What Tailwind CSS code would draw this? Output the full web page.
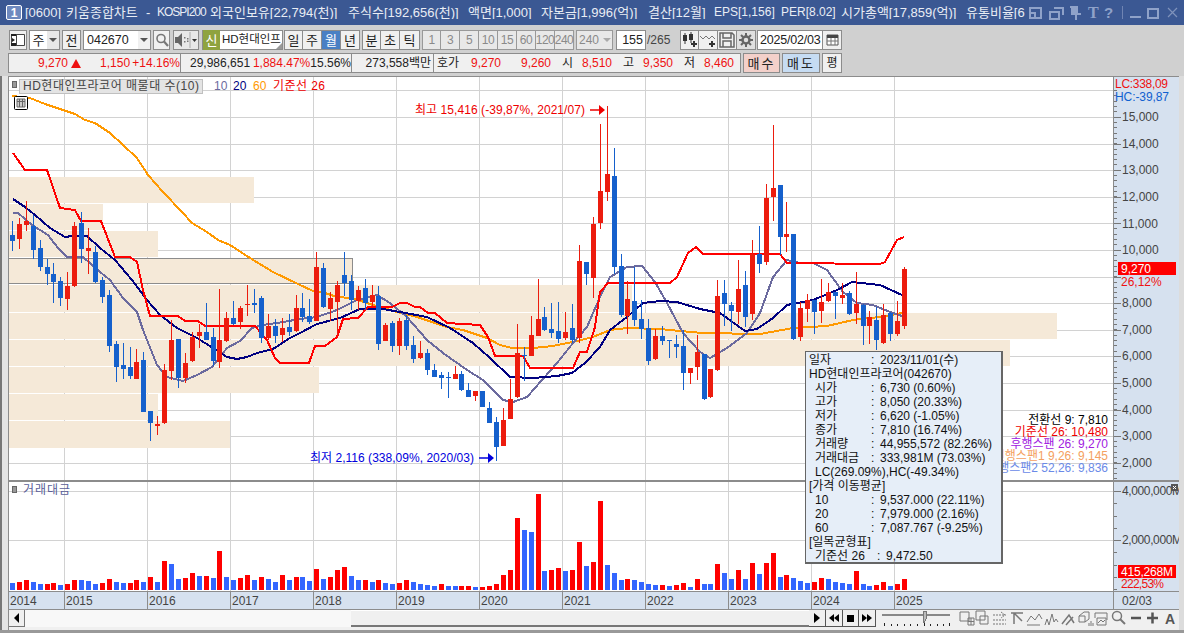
<!DOCTYPE html>
<html lang="ko">
<head>
<meta charset="utf-8">
<title>키움종합차트</title>
<script src="https://cdn.jsdelivr.net/npm/@tailwindcss/browser@4"></script>
</head>
<body class="[font-family:'Liberation_Sans','Noto_Sans_CJK_KR',sans-serif] text-[12px] leading-none">
<div class="w-[1184px] h-[633px] overflow-hidden flex flex-col bg-[#d0d0d0] text-[#222]">

  <!-- title bar -->
  <div class="h-[25px] shrink-0 bg-[#3b5893] flex items-center text-[#e9edf5] text-[13px] whitespace-nowrap">
    <div class="ml-[6px] w-[16px] h-[15px] rounded-[2px] border border-white bg-[#6f8abf] flex items-center justify-center text-white font-bold text-[12px]">1</div>
    <div class="ml-[3px] w-[1004px] flex overflow-hidden">
      <span class="w-[41px]">[0600]</span>
      <span class="w-[80px]">키움종합차트</span>
      <span class="w-[11px]">-</span>
      <span class="w-[53px] text-[12px] tracking-[-1px]">KOSPI200</span>
      <span class="w-[138px]">외국인보유[22,794(천)]</span>
      <span class="w-[120px]">주식수[192,656(천)]</span>
      <span class="w-[73px]">액면[1,000]</span>
      <span class="w-[107px]">자본금[1,996(억)]</span>
      <span class="w-[66px]">결산[12월]</span>
      <span class="w-[67px] text-[12px]">EPS[1,156]</span>
      <span class="w-[60px] text-[12px]">PER[8.02]</span>
      <span class="w-[125px]">시가총액[17,859(억)]</span>
      <span class="w-[60px]">유통비율[6</span>
    </div>
    <svg width="152" height="25" viewBox="1032 0 152 25" class="shrink-0" fill="none" stroke="#8fa2c9" stroke-width="2" shape-rendering="crispEdges">
      <path d="M1033 8h11v10h-11zM1033 13h5v5"/>
      <path d="M1057 8h9v7M1053 12h9v7h-9z" stroke-width="1.5"/>
      <path d="M1073 7h8M1074 14h10M1079 14v6M1075 8v6M1080 8v6" /><path d="M1075 8h5v6h-5z" fill="#8fa2c9" stroke="none"/>
      <text x="1091" y="18" font-family="Liberation Serif" font-size="16" font-weight="700" fill="#8fa2c9" stroke="none">T</text>
      <text x="1107" y="18" font-size="15" font-weight="700" fill="#8fa2c9" stroke="none">?</text>
      <path d="M1125 6v13" stroke-width="1" stroke="#6f84b3"/>
      <path d="M1133 17h11"/>
      <path d="M1151 9h10v9h-10z"/>
      <path d="M1171 8l9 9M1180 8l-9 9" stroke-width="1.2" stroke="#7f92bb" shape-rendering="auto"/>
    </svg>
  </div>

  <!-- toolbar -->
  <div class="h-[51px] shrink-0 flex flex-col">
    <div class="h-[20px] mt-[5px] ml-[9px] flex">
      <div class="w-[18px] border border-[#8c8c8c] bg-[#f0f0f0] flex items-center justify-center">
        <svg width="14" height="14" viewBox="0 0 14 14"><path d="M.5 1.5h13v11H.5zM5.5 1.5v11" fill="#fff" stroke="#444"/><path d="M0 1h5v2H0zM0 10h5v3H0zM1 5l3 2-3 2z" fill="#222"/></svg>
      </div>
      <div class="ml-[2px] w-[31px] border border-[#8c8c8c] bg-white flex">
        <div class="w-[17px] flex items-center justify-center text-[13px]">주</div>
        <div class="flex-1 bg-[#e8e8e8] flex items-center justify-center"><div class="w-0 h-0 border-x-[4px] border-x-transparent border-t-[4px] border-t-[#555]"></div></div>
      </div>
      <div class="ml-[2px] w-[19px] border border-[#8c8c8c] bg-[#f0f0f0] flex items-center justify-center text-[13px]">전</div>
      <div class="ml-[2px] w-[68px] border border-[#8c8c8c] bg-white flex">
        <div class="w-[54px] flex items-center pl-[3px] text-[12.5px]">042670</div>
        <div class="flex-1 bg-[#f0f0f0] flex items-center justify-center"><div class="w-0 h-0 border-x-[4px] border-x-transparent border-t-[4px] border-t-[#555]"></div></div>
      </div>
      <div class="ml-[2px] w-[17px] border border-[#8c8c8c] bg-[#f0f0f0] flex items-center justify-center">
        <svg width="14" height="14" viewBox="0 0 14 14" fill="none" stroke="#777" stroke-width="1.6"><circle cx="6" cy="5.5" r="4"/><path d="M9 8.5l4 4.5" stroke-width="2.2"/></svg>
      </div>
      <div class="ml-[3px] w-[26px] border border-[#8c8c8c] bg-[#e8e8e8] flex items-center">
        <svg width="24" height="18" viewBox="0 0 24 18"><path d="M1 6h3l4-4v14l-4-4H1z" fill="#666"/><path d="M10 6h1.500v1.500H10zM10 10h1.500v1.500H10zM13 7h1.500v1.500H13zM13 9.500h1.500V11H13z" fill="#777"/><path d="M16 1v16" stroke="#aaa"/><path d="M18 8h5l-2.500 3z" fill="#333"/></svg>
      </div>
      <div class="ml-[3px] w-[81px] border border-[#8c8c8c] bg-white flex relative">
        <div class="w-[17px] -my-px bg-[#8fa33f] text-white flex items-center justify-center text-[13px]">신</div>
        <div class="flex-1 flex items-center pl-[2px] whitespace-nowrap text-[11.5px]">HD현대인프</div>
        <div class="absolute right-0 bottom-0 w-0 h-0 border-l-[6px] border-l-transparent border-b-[6px] border-b-[#999]"></div>
      </div>
      <div class="ml-[1px] flex text-[13px]">
        <div class="w-[19px] border border-[#8c8c8c] bg-[#f0f0f0] flex items-center justify-center">일</div>
        <div class="w-[19px] border-y border-r border-[#8c8c8c] bg-[#f0f0f0] flex items-center justify-center">주</div>
        <div class="w-[19px] border-y border-r border-[#8c8c8c] bg-[#4a80c4] text-white flex items-center justify-center">월</div>
        <div class="w-[19px] border-y border-r border-[#8c8c8c] bg-[#f0f0f0] flex items-center justify-center">년</div>
      </div>
      <div class="ml-[2px] flex text-[13px]">
        <div class="w-[19px] border border-[#8c8c8c] bg-[#f0f0f0] flex items-center justify-center">분</div>
        <div class="w-[19px] border-y border-r border-[#8c8c8c] bg-[#f0f0f0] flex items-center justify-center">초</div>
        <div class="w-[20px] border-y border-r border-[#8c8c8c] bg-[#f0f0f0] flex items-center justify-center">틱</div>
      </div>
      <div class="ml-[2px] flex text-[#8a8a8a] text-[12px] tracking-[-0.5px]">
        <div class="w-[19px] border border-[#999] bg-[#e8e8e8] flex items-center justify-center">1</div>
        <div class="w-[19px] border-y border-r border-[#999] bg-[#e8e8e8] flex items-center justify-center">3</div>
        <div class="w-[19px] border-y border-r border-[#999] bg-[#e8e8e8] flex items-center justify-center">5</div>
        <div class="w-[19px] border-y border-r border-[#999] bg-[#e8e8e8] flex items-center justify-center">10</div>
        <div class="w-[19px] border-y border-r border-[#999] bg-[#e8e8e8] flex items-center justify-center">15</div>
        <div class="w-[19px] border-y border-r border-[#999] bg-[#e8e8e8] flex items-center justify-center">60</div>
        <div class="w-[19px] border-y border-r border-[#999] bg-[#e8e8e8] flex items-center justify-center">120</div>
        <div class="w-[19px] border-y border-r border-[#999] bg-[#e8e8e8] flex items-center justify-center">240</div>
      </div>
      <div class="ml-[2px] w-[37px] border border-[#999] bg-[#e8e8e8] flex text-[#8a8a8a]">
        <div class="w-[24px] flex items-center justify-center">240</div>
        <div class="flex-1 flex items-center justify-center"><div class="w-0 h-0 border-x-[4px] border-x-transparent border-t-[4px] border-t-[#aaa]"></div></div>
      </div>
      <div class="ml-[3px] w-[30px] border border-[#8c8c8c] bg-white flex items-center justify-end pr-[2px] text-[12.5px]">155</div>
      <div class="w-[34px] flex items-center pl-[1px] text-[#444]">/265</div>
      <div class="flex">
        <div class="w-[19px] border border-[#8c8c8c] bg-[#f0f0f0]"><svg width="17" height="18" viewBox="0 0 17 18"><path d="M4 2v11M10 1v11" stroke="#333"/><path d="M2 4h4v6H2zM8 3h4v6H8z" fill="#333"/><path d="M10 13h6M13 10v6" stroke="#333" stroke-width="2"/></svg></div>
        <div class="w-[19px] border-y border-r border-[#8c8c8c] bg-[#f0f0f0]"><svg width="18" height="18" viewBox="0 0 18 18" fill="none"><path d="M1 5l3 3 3-3 3 3 3-3 3 3" stroke="#777"/><path d="M10 13h6M13 10v6" stroke="#333" stroke-width="2"/></svg></div>
        <div class="w-[19px] border-y border-r border-[#8c8c8c] bg-[#f0f0f0]"><svg width="18" height="18" viewBox="0 0 18 18" fill="none" stroke="#666" stroke-width="1.500"><path d="M2 2h12l2 2v12H2zM5 2v5h8V2M5 16v-6h8v6"/></svg></div>
        <div class="w-[19px] border-y border-r border-[#8c8c8c] bg-[#e0e0e0]"><svg width="18" height="18" viewBox="0 0 18 18" fill="none" stroke="#666"><circle cx="9" cy="9" r="3.500" stroke-width="2.500"/><path d="M9 2v3M9 13v3M2 9h3M13 9h3M4 4l2 2M12 12l2 2M14 4l-2 2M6 12l-2 2" stroke-width="2"/></svg></div>
      </div>
      <div class="ml-[1px] w-[66px] border border-[#8c8c8c] bg-white flex items-center pl-[2px] text-[12.5px] tracking-[-0.2px] whitespace-nowrap overflow-hidden">2025/02/03</div>
      <div class="w-[19px] border-y border-r border-[#8c8c8c] bg-[#f0f0f0] flex items-center justify-center">
        <svg width="13" height="12" viewBox="0 0 13 12"><path d="M1 1h11v10H1z" fill="#fff" stroke="#555"/><path d="M1 1h11v3H1z" fill="#444"/><path d="M1 7h11M5 4v7M9 4v7" stroke="#777"/></svg>
      </div>
    </div>
    <div class="h-[20px] mt-[3px] ml-[8px] flex whitespace-nowrap text-[12px]">
      <div class="w-[733px] flex border border-[#8c8c8c] bg-[#f0f0f0] text-[#ee1111]">
        <div class="w-[172px] border-r border-[#8c8c8c] flex items-center">
          <span class="ml-[29px] w-[31px]">9,270</span>
          <span class="w-0 h-0 border-x-[5px] border-x-transparent border-b-[9px] border-b-[#ee1111] mr-[19px] ml-[3px]"></span>
          <span class="w-[36px]">1,150</span>
          <span>+14.16%</span>
        </div>
        <div class="w-[171px] border-r border-[#8c8c8c] flex items-center">
          <span class="ml-[9px] w-[66px] text-[#222]">29,986,651</span>
          <span class="w-[58px]">1,884.47%</span>
          <span class="text-[#222]">15.56%</span>
        </div>
        <div class="w-[82px] border-r border-[#8c8c8c] flex items-center text-[#222] justify-end pr-[2px]">273,558백만</div>
        <div class="flex-1 flex items-center">
          <span class="ml-[3px] w-[34px] text-[#222]">호가</span>
          <span class="w-[50px]">9,270</span>
          <span class="w-[41px]">9,260</span>
          <span class="w-[20px] text-[#222]">시</span>
          <span class="w-[41px]">8,510</span>
          <span class="w-[20px] text-[#222]">고</span>
          <span class="w-[41px]">9,350</span>
          <span class="w-[20px] text-[#222]">저</span>
          <span>8,460</span>
        </div>
      </div>
      <div class="ml-[2px] w-[37px] border border-[#8c8c8c] bg-[#f3d0ca] flex items-center justify-center text-[13px] tracking-[2px]">매수</div>
      <div class="ml-[2px] w-[38px] border border-[#8c8c8c] bg-[#c6dcf3] flex items-center justify-center text-[13px] tracking-[2px]">매도</div>
      <div class="ml-[2px] w-[20px] border border-[#8c8c8c] bg-[#f0f0f0] flex items-center justify-center text-[12px]">평</div>
    </div>
  </div>

  <!-- main -->
  <div class="flex-1 min-h-0 flex">
    <div class="w-[8px] shrink-0 flex">
      <div class="w-[2px] bg-[#777]"></div>
      <div class="flex-1 bg-[#e4e4e4]"></div>
    </div>
    <div class="w-[1171px] shrink-0 flex flex-col border-l border-t border-[#8c8c8c]">
      <div class="relative h-[514px] shrink-0">
        <svg id="chart" width="1170" height="514" viewBox="9 77 1170 514" class="block" font-size="12">
          <rect x="9" y="77" width="1104" height="514" fill="#fff"/>
          <rect x="1113" y="77" width="66" height="514" fill="#d6e1ef"/>
          <g id="grid" shape-rendering="crispEdges"></g>
          <g id="bands" fill="#f5e9d8" shape-rendering="crispEdges">
            <rect x="9" y="177" width="245" height="26"/>
            <rect x="9" y="204" width="94" height="26"/>
            <rect x="9" y="231" width="149" height="26"/>
            <rect x="9" y="259" width="343" height="24"/>
            <rect x="9" y="285" width="623" height="27"/>
            <rect x="9" y="313" width="1048" height="26"/>
            <rect x="9" y="340" width="1001" height="26"/>
            <rect x="9" y="367" width="310" height="26"/>
            <rect x="9" y="394" width="149" height="26"/>
            <rect x="9" y="421" width="221" height="27"/>
            <path d="M9 258.500h343v25H9" fill="none" stroke="#8c8c8c"/>
          </g>
          <g id="lines" fill="none" stroke-width="2" stroke-linejoin="round" shape-rendering="crispEdges"></g>
          <g id="candles" shape-rendering="crispEdges"></g>
          <g id="vols" shape-rendering="crispEdges"></g>

          <!-- legends -->
          <rect x="12.500" y="81.500" width="4" height="6" fill="#999" stroke="#666"/>
          <rect x="19.500" y="79.500" width="183" height="14" fill="#e4e4e4" stroke="#c0c0c0"/>
          <text x="23" y="90" fill="#444" textLength="176">HD현대인프라코어 매물대 수(10)</text>
          <text x="214" y="90" fill="#6b6a9e">10</text>
          <text x="233" y="90" fill="#000080">20</text>
          <text x="253" y="90" fill="#ff9900">60</text>
          <text x="273" y="90" fill="#ee0000" textLength="52">기준선 26</text>
          <rect x="14.500" y="96.500" width="13" height="13" rx="1" fill="#fff" stroke="#000"/>
          <path d="M17 99h8v8h-8zM17 101.500h8M19.500 99v8M22.500 99v8" fill="#ccc" stroke="#666"/>
          <rect x="12.500" y="486.500" width="4" height="6" fill="#999" stroke="#666"/>
          <text x="23" y="494" fill="#5b5f9a" textLength="47">거래대금</text>

          <!-- high / low -->
          <text x="415" y="114" fill="#ee0000" textLength="170">최고 15,416 (-39,87%, 2021/07)</text>
          <path d="M590 110h10" stroke="#ee0000" stroke-width="1.500"/><path d="M599 105l6 5-6 5z" fill="#ee0000"/>
          <text x="310" y="462" fill="#0000dd" textLength="164">최저 2,116 (338,09%, 2020/03)</text>
          <path d="M479 458h10" stroke="#0000dd" stroke-width="1.500"/><path d="M488 453l6 5-6 5z" fill="#0000dd"/>

          <!-- ichimoku readout -->
          <g text-anchor="end">
            <text x="1108" y="424" fill="#000">전환선 9: 7,810</text>
            <text x="1108" y="436" fill="#ee0000">기준선 26: 10,480</text>
            <text x="1108" y="448" fill="#a020e0">후행스팬 26: 9,270</text>
            <text x="1108" y="460" fill="#f4a060">선행스팬1 9,26: 9,145</text>
            <text x="1108" y="472" fill="#6a8ae8">선행스팬2 52,26: 9,836</text>
          </g>

          <!-- axis -->
          <path d="M1113.500 77v514" stroke="#8c8c8c" shape-rendering="crispEdges"/>
          <path id="ticks" stroke="#777" fill="none" shape-rendering="crispEdges"/>
          <text x="1115" y="88" fill="#ee1111" font-size="12" textLength="53">LC:338,09</text>
          <text x="1115" y="101" fill="#1060d0" font-size="12" textLength="54">HC:-39,87</text>
          <g fill="#444" font-size="12">
            <text x="1122" y="121">15,000</text>
            <text x="1122" y="148">14,000</text>
            <text x="1122" y="174">13,000</text>
            <text x="1122" y="201">12,000</text>
            <text x="1122" y="228">11,000</text>
            <text x="1122" y="254">10,000</text>
            <text x="1122" y="307">8,000</text>
            <text x="1122" y="334">7,000</text>
            <text x="1122" y="360">6,000</text>
            <text x="1122" y="387">5,000</text>
            <text x="1122" y="414">4,000</text>
            <text x="1122" y="440">3,000</text>
            <text x="1122" y="467">2,000</text>
            <text x="1122" y="495" textLength="60">4,000,000M</text>
            <text x="1122" y="544" textLength="60">2,000,000M</text>
          </g>
          <rect x="1118" y="262" width="58" height="13" fill="#ff0000"/>
          <text x="1121" y="273" fill="#fff">9,270</text>
          <text x="1121" y="286" fill="#ee1111">26,12%</text>
          <rect x="1171" y="484" width="7" height="7" fill="#555"/>
          <path d="M1173 486l3 3M1176 486l-3 3" stroke="#fff"/>
          <rect x="1118" y="565" width="58" height="13" fill="#ff0000"/>
          <text x="1121" y="576" fill="#fff" textLength="52">415,268M</text>
          <text x="1121" y="588" fill="#ee1111" textLength="43">222,53%</text>
          <path d="M9 480.500h1170" stroke="#8c8c8c" stroke-width="2" shape-rendering="crispEdges"/>
        </svg>

        <!-- crosshair tooltip -->
        <div class="absolute left-[796px] top-[274px] w-[198px] h-[213px] border border-[#666] border-b-2 border-r-2 bg-[#e6eef8] pl-[3px] pt-[1px] text-[#111] text-[12px] leading-[14px] whitespace-nowrap">
          <div class="flex"><span class="w-[62px]">일자</span><span class="w-[9px]">:</span><span>2023/11/01(수)</span></div>
          <div>HD현대인프라코어(042670)</div>
          <div class="flex"><span class="w-[62px] pl-[6px]">시가</span><span class="w-[9px]">:</span><span>6,730 (0.60%)</span></div>
          <div class="flex"><span class="w-[62px] pl-[6px]">고가</span><span class="w-[9px]">:</span><span>8,050 (20.33%)</span></div>
          <div class="flex"><span class="w-[62px] pl-[6px]">저가</span><span class="w-[9px]">:</span><span>6,620 (-1.05%)</span></div>
          <div class="flex"><span class="w-[62px] pl-[6px]">종가</span><span class="w-[9px]">:</span><span>7,810 (16.74%)</span></div>
          <div class="flex"><span class="w-[62px] pl-[6px]">거래량</span><span class="w-[9px]">:</span><span>44,955,572 (82.26%)</span></div>
          <div class="flex"><span class="w-[62px] pl-[6px]">거래대금</span><span class="w-[9px]">:</span><span>333,981M (73.03%)</span></div>
          <div class="pl-[6px]">LC(269.09%),HC(-49.34%)</div>
          <div>[가격 이동평균]</div>
          <div class="flex"><span class="w-[62px] pl-[6px]">10</span><span class="w-[9px]">:</span><span>9,537.000 (22.11%)</span></div>
          <div class="flex"><span class="w-[62px] pl-[6px]">20</span><span class="w-[9px]">:</span><span>7,979.000 (2.16%)</span></div>
          <div class="flex"><span class="w-[62px] pl-[6px]">60</span><span class="w-[9px]">:</span><span>7,087.767 (-9.25%)</span></div>
          <div>[일목균형표]</div>
          <div class="flex"><span class="w-[68px] pl-[6px]">기준선 26</span><span class="w-[9px]">:</span><span>9,472.50</span></div>
        </div>
      </div>

      <!-- time axis -->
      <div class="h-[19px] shrink-0 flex bg-[#d6e1ef] border-y border-[#8c8c8c] text-[#444] text-[12px]">
        <div class="w-[55px] pl-[1px] flex items-center">2014</div>
        <div class="w-[83px] pl-[1px] flex items-center border-l border-[#8c8c8c]">2015</div>
        <div class="w-[83px] pl-[1px] flex items-center border-l border-[#8c8c8c]">2016</div>
        <div class="w-[83px] pl-[1px] flex items-center border-l border-[#8c8c8c]">2017</div>
        <div class="w-[83px] pl-[1px] flex items-center border-l border-[#8c8c8c]">2018</div>
        <div class="w-[83px] pl-[1px] flex items-center border-l border-[#8c8c8c]">2019</div>
        <div class="w-[83px] pl-[1px] flex items-center border-l border-[#8c8c8c]">2020</div>
        <div class="w-[83px] pl-[1px] flex items-center border-l border-[#8c8c8c]">2021</div>
        <div class="w-[83px] pl-[1px] flex items-center border-l border-[#8c8c8c]">2022</div>
        <div class="w-[83px] pl-[1px] flex items-center border-l border-[#8c8c8c]">2023</div>
        <div class="w-[83px] pl-[1px] flex items-center border-l border-[#8c8c8c]">2024</div>
        <div class="w-[219px] pl-[1px] flex items-center border-l border-[#8c8c8c]">2025</div>
        <div class="flex-1 pl-[8px] flex items-center border-l border-[#8c8c8c]">02/03</div>
      </div>

      <!-- scrollbar + playback -->
      <div class="h-[17px] shrink-0 flex bg-[#f0f0f0]">
        <div class="w-[16px] border-r border-b border-[#777] bg-[#f0f0f0] flex items-center justify-center">
          <div class="w-0 h-0 border-y-[5px] border-y-transparent border-r-[5px] border-r-black"></div>
        </div>
        <div class="w-[326px] bg-[#f8f8f8]"></div>
        <div class="w-[458px] bg-[#f0f0f0] border-b-2 border-[#777] border-t border-t-white"></div>
        <div class="flex">
          <div class="w-[17px] border-r border-b border-[#555] flex items-center justify-center"><div class="w-0 h-0 border-y-[5px] border-y-transparent border-l-[6px] border-l-black"></div></div>
          <div class="w-[17px] border-r border-b border-[#555] flex items-center justify-center"><div class="w-0 h-0 border-y-[4px] border-y-transparent border-r-[5px] border-r-black"></div><div class="w-0 h-0 border-y-[4px] border-y-transparent border-r-[5px] border-r-black"></div></div>
          <div class="w-[16px] border-r border-b border-[#555] flex items-center justify-center"><div class="w-[7px] h-[7px] bg-black"></div></div>
          <div class="w-[17px] border-r border-b border-[#555] flex items-center justify-center"><div class="w-0 h-0 border-y-[4px] border-y-transparent border-l-[5px] border-l-black"></div><div class="w-0 h-0 border-y-[4px] border-y-transparent border-l-[5px] border-l-black"></div></div>
        </div>
        <svg width="70" height="17" viewBox="0 0 70 17" class="ml-[6px] shrink-0" shape-rendering="crispEdges">
          <path d="M0 4.500h68" stroke="#888" stroke-width="2"/>
          <path d="M41 1h3v8l-2 4-1-2z" fill="#bbb" stroke="#777"/>
          <path d="M2 13v3M9 14v2M15 14v2M22 14v2M28 14v2M35 14v2M42 13v3M48 14v2M55 14v2M61 14v2M67 13v3" stroke="#222"/>
        </svg>
        <svg width="220" height="17" viewBox="959 0 220 17" class="ml-[6px] shrink-0" fill="none" stroke="#777">
          <path d="M961 2h9v9h-9zM969 8h6v7h-6zM972 8v7M969 11.500h6"/>
          <path d="M977 1h9v9h-9zM981 6h8v8h-8z"/>
          <path d="M994 5h13M994 10h13M994 14h13M1002 2l4 3-4 3" stroke-dasharray="2 1"/>
          <path d="M1012 3h12M1015 3v11M1015 3l8 8" stroke-width="1.500"/>
          <path d="M1028 12l4-6 4 4 4-6 3 5M1028 15h13" />
          <path d="M1046 15l2-6 2 6 3-11 2 8 2-3 2 3"/>
          <path d="M1063 14l7-9 5 8M1067 15l7-8" stroke-width="1.500"/>
          <path d="M1080 12v-6l5-4h5v7l-4 3zM1080 6h6v6M1090 13v3M1092 11v5M1094 13v3" />
          <path d="M1096 3h12v7M1096 3v5M1098 8h9v7h-9zM1099 13l3-3 2 2 2-2"/>
          <circle cx="1118" cy="6" r="4.500" stroke-width="1.500"/><path d="M1121 9l5 5" stroke-width="2"/>
          <path d="M1132 8h10" stroke-width="2.500" stroke="#555"/>
          <path d="M1148 8h11M1153.500 2.500v11" stroke-width="2.500" stroke="#555"/>
          <text x="1166" y="14" font-size="14" font-weight="700" fill="#555" stroke="none">A</text>
        </svg>
      </div>
      <div class="flex-1 bg-[#f0f0f0]"></div>
    </div>
    <div class="flex-1 bg-[#dcdcdc]"></div>
  </div>
  <div class="h-[3px] shrink-0 bg-[#999]"></div>
</div>

<script>
const NS='http://www.w3.org/2000/svg';
const add=(p,tag,a)=>{const e=document.createElementNS(NS,tag);for(const k in a)e.setAttribute(k,a[k]);p.appendChild(e);};
const $=id=>document.getElementById(id);
// grid
const yg=[90];for(let k=0;k<14;k++)yg.push(Math.round(117+26.6*k));yg.push(491,540);
for(const y of yg)add($('grid'),'path',{d:`M9 ${y+.5}H1113`,stroke:'#d2d2d2'});
for(const x of [64,147,230,313,396,479,562,645,728,811,894])add($('grid'),'path',{d:`M${x+.5} 77V591`,stroke:'#d2d2d2'});
// axis ticks
let t='';
for(let y=90;y<480;y+=5.32){t+=`M1114 ${Math.round(y)+.5}h3`;}
for(let k=0;k<14;k++){t+=`M1114 ${Math.round(117+26.6*k)+.5}h7`;}
for(const y of [491,540])t+=`M1114 ${y+.5}h7`;
for(let y=491;y<590;y+=12.3)t+=`M1114 ${Math.round(y)+.5}h3`;
$('ticks').setAttribute('d',t);
// moving averages and base line
const L={
 orange:[12,96,30,98,45,104,60,109,75,114,85,120,95,123,110,133,123,145,137,158,148,175,163,192,182,212,192,223,207,232,218,240,230,245,250,258,273,272,298,284,313,291,325,293,337,297,350,298,358,300,373,305,397,312,417,317,447,327,463,330,487,338,500,345,512,348,533,348,553,346,577,341,593,337,610,330,627,328,660,329,680,331,703,333,760,334,793,328,827,326,853,320,880,317,902,313],
 red:[13,153,25,170,47,170,60,208,75,210,81,221,101,221,115,257,130,257,137,262,143,290,150,316,178,316,185,321,198,321,205,326,255,326,267,340,275,358,280,363,309,363,315,346,325,346,337,337,343,319,358,318,368,307,392,307,400,303,407,303,415,307,420,307,428,313,435,313,447,323,480,325,488,337,495,356,523,356,530,368,573,368,580,352,587,352,595,327,600,292,608,283,670,283,677,277,688,253,696,247,703,254,780,254,787,263,880,264,885,262,897,240,904,237],
 navy:[13,199,25,207,35,215,50,228,65,237,72,236,87,236,100,248,115,260,132,280,147,300,160,315,177,328,197,338,213,348,227,357,237,359,247,357,257,353,273,349,290,338,300,333,317,324,340,318,360,309,383,309,400,312,427,317,450,328,473,343,490,358,510,377,533,378,557,376,572,373,585,363,600,347,610,330,627,317,643,303,660,301,677,302,700,309,720,313,745,331,757,329,773,318,787,305,813,300,837,290,852,282,880,285,902,295],
 slate:[13,213,18,213,32,225,48,235,58,248,67,257,83,257,100,272,110,280,123,298,137,312,143,330,157,365,167,377,183,381,197,375,212,367,227,348,240,341,252,328,263,325,283,322,300,319,317,317,337,310,357,300,377,295,390,303,407,317,427,340,443,353,467,370,483,380,503,400,513,402,527,397,557,363,573,343,587,327,600,297,610,277,627,267,642,266,655,282,667,303,683,333,700,352,710,358,727,348,747,333,760,313,773,277,787,260,800,263,813,263,827,270,843,292,857,303,873,305,890,312,902,316]
};
const colors={slate:'#6b6a9e',orange:'#ff9900',navy:'#000080',red:'#ff0000'};
// candles: colour (1 red, 0 blue), high, body top, body bottom, low
const C=[[0,221,235,241,251],[1,218,224,239,249],[1,201,221,225,231],[0,215,226,250,259],[0,240,248,267,271],[0,259,267,274,285],[0,263,274,282,303],[0,277,281,298,306],[1,272,286,299,310],[1,222,226,286,287],[0,212,223,249,263],[1,228,248,251,274],[0,246,252,282,283],[0,277,280,297,303],[0,290,295,346,352],[0,341,344,367,382],[0,343,365,369,379],[0,347,367,376,379],[1,349,362,379,379],[0,352,360,412,412],[0,411,411,423,441],[1,416,424,426,435],[1,364,370,423,424],[1,320,340,371,380],[0,339,339,378,388],[1,353,363,378,383],[1,332,337,361,362],[1,324,332,336,348],[0,303,332,340,340],[0,328,337,361,366],[1,289,340,362,368],[1,312,318,341,342],[0,301,318,324,325],[1,306,308,322,329],[1,285,304,305,316],[0,289,303,305,313],[0,296,298,338,343],[1,314,326,338,340],[0,319,326,336,343],[1,318,328,335,342],[0,314,327,332,336],[1,295,308,331,332],[0,293,308,317,322],[0,299,316,322,324],[1,252,267,321,321],[0,263,268,307,308],[1,292,298,309,321],[1,281,285,302,336],[0,252,275,283,296],[0,275,281,300,310],[1,286,290,301,310],[0,279,288,303,310],[1,285,295,302,306],[0,286,296,344,350],[1,323,325,341,341],[0,321,323,346,352],[1,318,321,346,355],[0,315,320,346,350],[0,336,345,359,363],[1,341,353,358,359],[0,349,353,370,375],[0,364,370,377,377],[0,372,375,378,389],[0,372,377,378,398],[1,366,374,379,379],[0,371,374,390,391],[0,383,390,397,397],[1,391,391,396,401],[0,391,391,407,407],[0,402,408,423,423],[0,417,422,447,461],[1,408,420,446,446],[1,379,399,419,419],[1,324,353,397,398],[0,347,355,356,381],[1,316,335,356,356],[1,279,319,336,336],[0,307,317,330,331],[0,303,329,333,338],[0,302,331,339,343],[1,312,332,338,340],[0,304,328,340,343],[1,245,261,338,343],[0,262,262,274,285],[1,217,224,278,298],[1,124,191,223,229],[1,106,174,192,201],[0,148,176,267,274],[0,254,266,315,317],[1,281,299,316,334],[0,267,301,320,326],[0,300,319,329,339],[0,319,328,361,365],[1,329,336,359,360],[0,326,336,341,345],[0,340,340,341,358],[0,335,344,347,358],[0,330,346,373,390],[1,368,368,373,384],[1,335,352,367,380],[0,354,354,399,400],[1,369,369,397,398],[1,280,296,370,371],[0,280,293,304,326],[0,302,305,311,331],[1,260,289,312,324],[0,271,285,317,327],[1,240,254,314,320],[0,226,254,264,273],[1,184,198,262,265],[1,125,188,197,221],[0,185,185,237,255],[1,202,234,237,252],[0,234,234,339,340],[1,302,308,337,341],[1,294,300,309,322],[0,300,300,312,334],[1,279,302,311,323],[1,283,292,301,302],[0,292,292,296,319],[1,283,295,298,304],[0,291,293,314,315],[1,272,304,313,324],[0,304,305,326,345],[1,311,317,326,344],[0,307,320,340,350],[1,304,315,343,344],[0,312,313,334,341],[1,301,321,334,336],[1,267,269,326,329]];
C.forEach((c,i)=>{
 const l=Math.round(10+6.915*i),f=c[0]?'#ec1c0e':'#1560cc';
 add($('candles'),'rect',{x:l+2,y:c[1],width:1,height:c[4]-c[1],fill:f});
 add($('candles'),'rect',{x:l,y:c[2],width:5,height:Math.max(1,c[3]-c[2]),fill:f});
});
for(const n of ['orange','slate','navy','red']){
 const a=L[n];let s='';for(let i=0;i<a.length;i+=2)s+=a[i]+','+a[i+1]+' ';
 add($('lines'),'polyline',{points:s,stroke:colors[n]});
}
// trading value bars: top of bar in 3x pixels below y=480; negative = down month
const V=[-309,306,300,-306,-312,312,309,-315,312,300,-300,-303,-312,309,297,-306,-309,309,300,-306,291,-306,243,-252,-297,294,279,-288,288,-294,213,-291,-300,294,285,-300,291,-297,-306,285,-300,291,-291,-303,267,-297,291,270,261,-288,-300,300,-306,300,-309,-312,309,300,-306,-312,-315,-318,312,-318,-318,318,318,-321,321,318,312,285,270,114,-150,-156,42,-273,270,264,-273,270,186,-258,246,63,-255,-279,-300,297,-300,-306,-312,-315,315,-318,315,309,-321,297,-312,-312,252,-279,-297,270,-297,249,-282,249,219,-291,285,-294,-303,-309,306,294,-297,-306,-309,-312,273,-312,-318,315,306,-318,312,297];
V.forEach((v,i)=>{
 const y=Math.round(480+Math.abs(v)/3);
 add($('vols'),'rect',{x:Math.round(10+6.915*i),y:y,width:5,height:590-y,fill:v>0?'#ff0000':'#3366ff'});
});
</script>
</body>
</html>
